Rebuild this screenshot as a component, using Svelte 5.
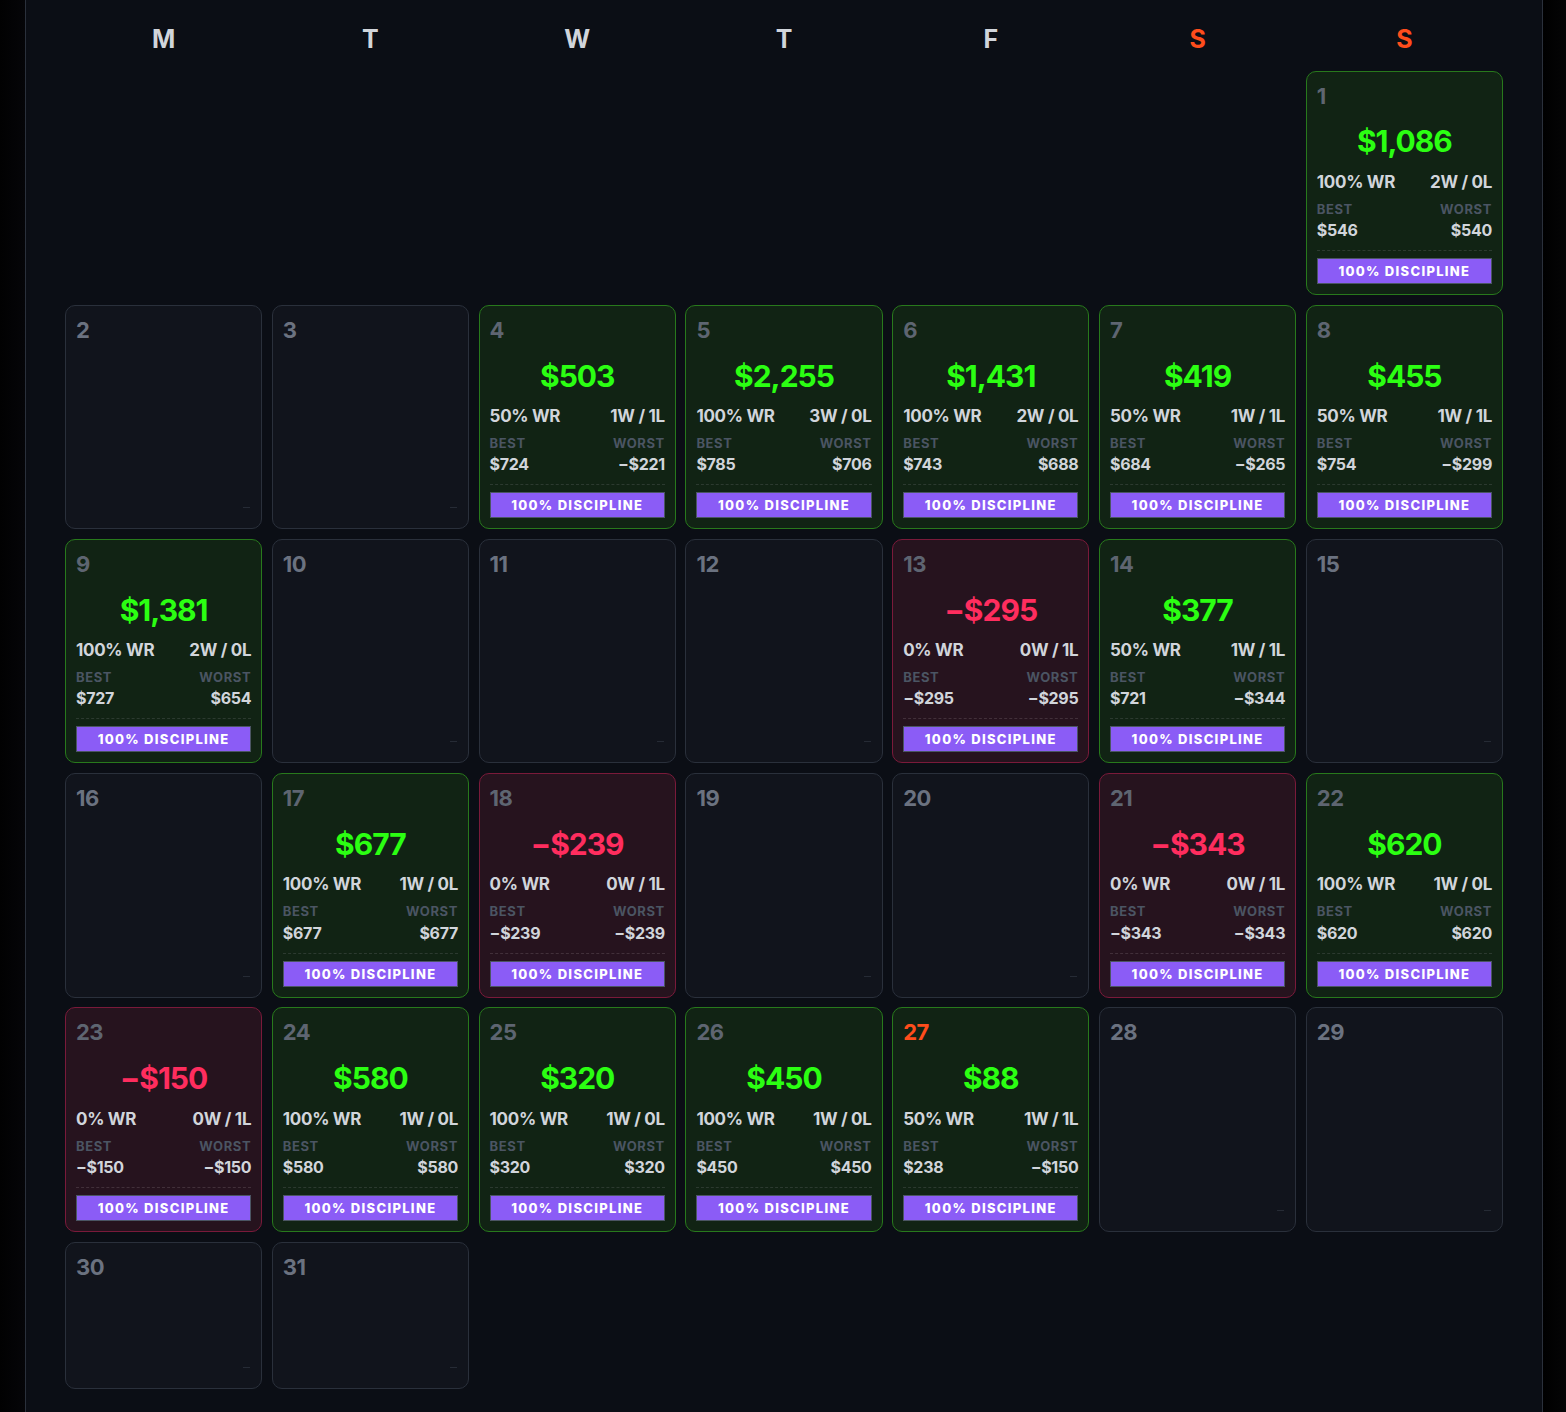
<script>
  const WEEKDAYS = [
    { label: 'M' }, { label: 'T' }, { label: 'W' }, { label: 'T' }, { label: 'F' },
    { label: 'S', weekend: true }, { label: 'S', weekend: true }
  ];

  // day -> [pnl, winrate, wins, losses, best, worst]
  const TRADES = {
    1: ['$1,086', 100, 2, 0, '$546', '$540'],
    4: ['$503', 50, 1, 1, '$724', '-$221'],
    5: ['$2,255', 100, 3, 0, '$785', '$706'],
    6: ['$1,431', 100, 2, 0, '$743', '$688'],
    7: ['$419', 50, 1, 1, '$684', '-$265'],
    8: ['$455', 50, 1, 1, '$754', '-$299'],
    9: ['$1,381', 100, 2, 0, '$727', '$654'],
    13: ['-$295', 0, 0, 1, '-$295', '-$295'],
    14: ['$377', 50, 1, 1, '$721', '-$344'],
    17: ['$677', 100, 1, 0, '$677', '$677'],
    18: ['-$239', 0, 0, 1, '-$239', '-$239'],
    21: ['-$343', 0, 0, 1, '-$343', '-$343'],
    22: ['$620', 100, 1, 0, '$620', '$620'],
    23: ['-$150', 0, 0, 1, '-$150', '-$150'],
    24: ['$580', 100, 1, 0, '$580', '$580'],
    25: ['$320', 100, 1, 0, '$320', '$320'],
    26: ['$450', 100, 1, 0, '$450', '$450'],
    27: ['$88', 50, 1, 1, '$238', '-$150']
  };

  const LEADING_BLANKS = 6;
  const TODAY = 27;
  const days = Array.from({ length: 31 }, (_, i) => i + 1);
  const blanks = Array.from({ length: LEADING_BLANKS });

  const money = (v) => v.replace('-', '\u2212');
</script>

<div class="page">
  <main class="calendar">
    <div class="weekdays">
      {#each WEEKDAYS as d}
        <div class="weekday" class:weekend={d.weekend}>{d.label}</div>
      {/each}
    </div>
    <div class="grid">
      {#each blanks as _}
        <div class="blank"></div>
      {/each}
      {#each days as day}
        {@const t = TRADES[day]}
        {#if t}
          <div class="cell" class:win={t[0][0] !== '-'} class:loss={t[0][0] === '-'}>
            <div class="date" class:today={day === TODAY}>{day}</div>
            <div class="pnl">{money(t[0])}</div>
            <div class="row stats">
              <span>{t[1]}% WR</span>
              <span>{t[2]}W / {t[3]}L</span>
            </div>
            <div class="row labels">
              <span>BEST</span>
              <span>WORST</span>
            </div>
            <div class="row values">
              <span>{money(t[4])}</span>
              <span>{money(t[5])}</span>
            </div>
            <div class="discipline-wrap">
              <div class="discipline">100% DISCIPLINE</div>
            </div>
          </div>
        {:else}
          <div class="cell empty">
            <div class="date">{day}</div>
            <div class="dash"></div>
          </div>
        {/if}
      {/each}
    </div>
  </main>
</div>

<style>
  :global(body) {
    margin: 0;
    background: #000;
    font-family: Inter, "Noto Sans", sans-serif;
  }
  .page {
    display: flex;
    justify-content: flex-start;
    padding-left: 25px;
    min-height: 1412px;
    background: linear-gradient(90deg, #010102, #050508 25px, #000 1543px, #050506);
  }
  .calendar {
    width: 1518px;
    box-sizing: border-box;
    padding: 0 39px 23px;
    background: #0b0e15;
    border-left: 1px solid #2a303b;
    border-right: 1px solid #2a303b;
  }
  .weekdays {
    display: grid;
    grid-template-columns: repeat(7, 1fr);
    column-gap: 9.6px;
    height: 71px;
  }
  .weekday {
    text-align: center;
    font-size: 25px;
    font-weight: 700;
    line-height: 30px;
    padding-top: 24px;
    color: #d1d5db;
  }
  .weekend { color: #ff4d1c; }
  .grid {
    display: grid;
    grid-template-columns: repeat(7, 1fr);
    gap: 9.9px 9.6px;
    grid-auto-rows: auto;
  }
  .cell {
    box-sizing: border-box;
    display: flex;
    flex-direction: column;
    min-height: 147px;
    padding: 10px;
    border: 1px solid #2a303b;
    border-radius: 10px;
    background: #11141c;
  }
  .cell.win {
    background: #112314;
    border-color: #28791c;
  }
  .cell.loss {
    background: #26131e;
    border-color: #7a1a3a;
  }
  .date {
    font-size: 22px;
    font-weight: 700;
    line-height: 28px;
    letter-spacing: -0.5px;
    color: #6b7280;
  }
  .win .date, .loss .date { color: #5e6571; }
  .win .date.today { color: #ff4d1c; }
  .dash {
    margin-top: auto;
    margin-bottom: 10px;
    margin-left: auto;
    margin-right: 1px;
    width: 7px;
    height: 1px;
    background: #262b35;
  }
  .pnl {
    margin-top: 12.4px;
    text-align: center;
    font-size: 30px;
    font-weight: 700;
    line-height: 38px;
    letter-spacing: -1px;
    color: #2bff12;
  }
  .loss .pnl { color: #ff2d5e; }
  .row {
    display: flex;
    justify-content: space-between;
  }
  .stats {
    margin-top: 11.7px;
    font-size: 17px;
    font-weight: 700;
    line-height: 20px;
    letter-spacing: -0.3px;
    color: #d1d5db;
  }
  .labels {
    margin-top: 10px;
    font-size: 13px;
    font-weight: 700;
    line-height: 14px;
    letter-spacing: 0.6px;
    color: #4b5563;
  }
  .values {
    margin-top: 4.15px;
    font-size: 16px;
    font-weight: 700;
    line-height: 20px;
    letter-spacing: -0.3px;
    color: #d1d5db;
  }
  .discipline-wrap {
    margin-top: 10px;
    padding-top: 7px;
    border-top: 1px dashed #2c3a30;
  }
  .loss .discipline-wrap { border-top-color: #42303a; }
  .discipline {
    box-sizing: border-box;
    height: 26px;
    border: 1px solid #4b5563;
    background: #8b5cf6;
    color: #fff;
    text-align: center;
    font-size: 13px;
    font-weight: 800;
    line-height: 24px;
    letter-spacing: 1.3px;
  }
</style>
